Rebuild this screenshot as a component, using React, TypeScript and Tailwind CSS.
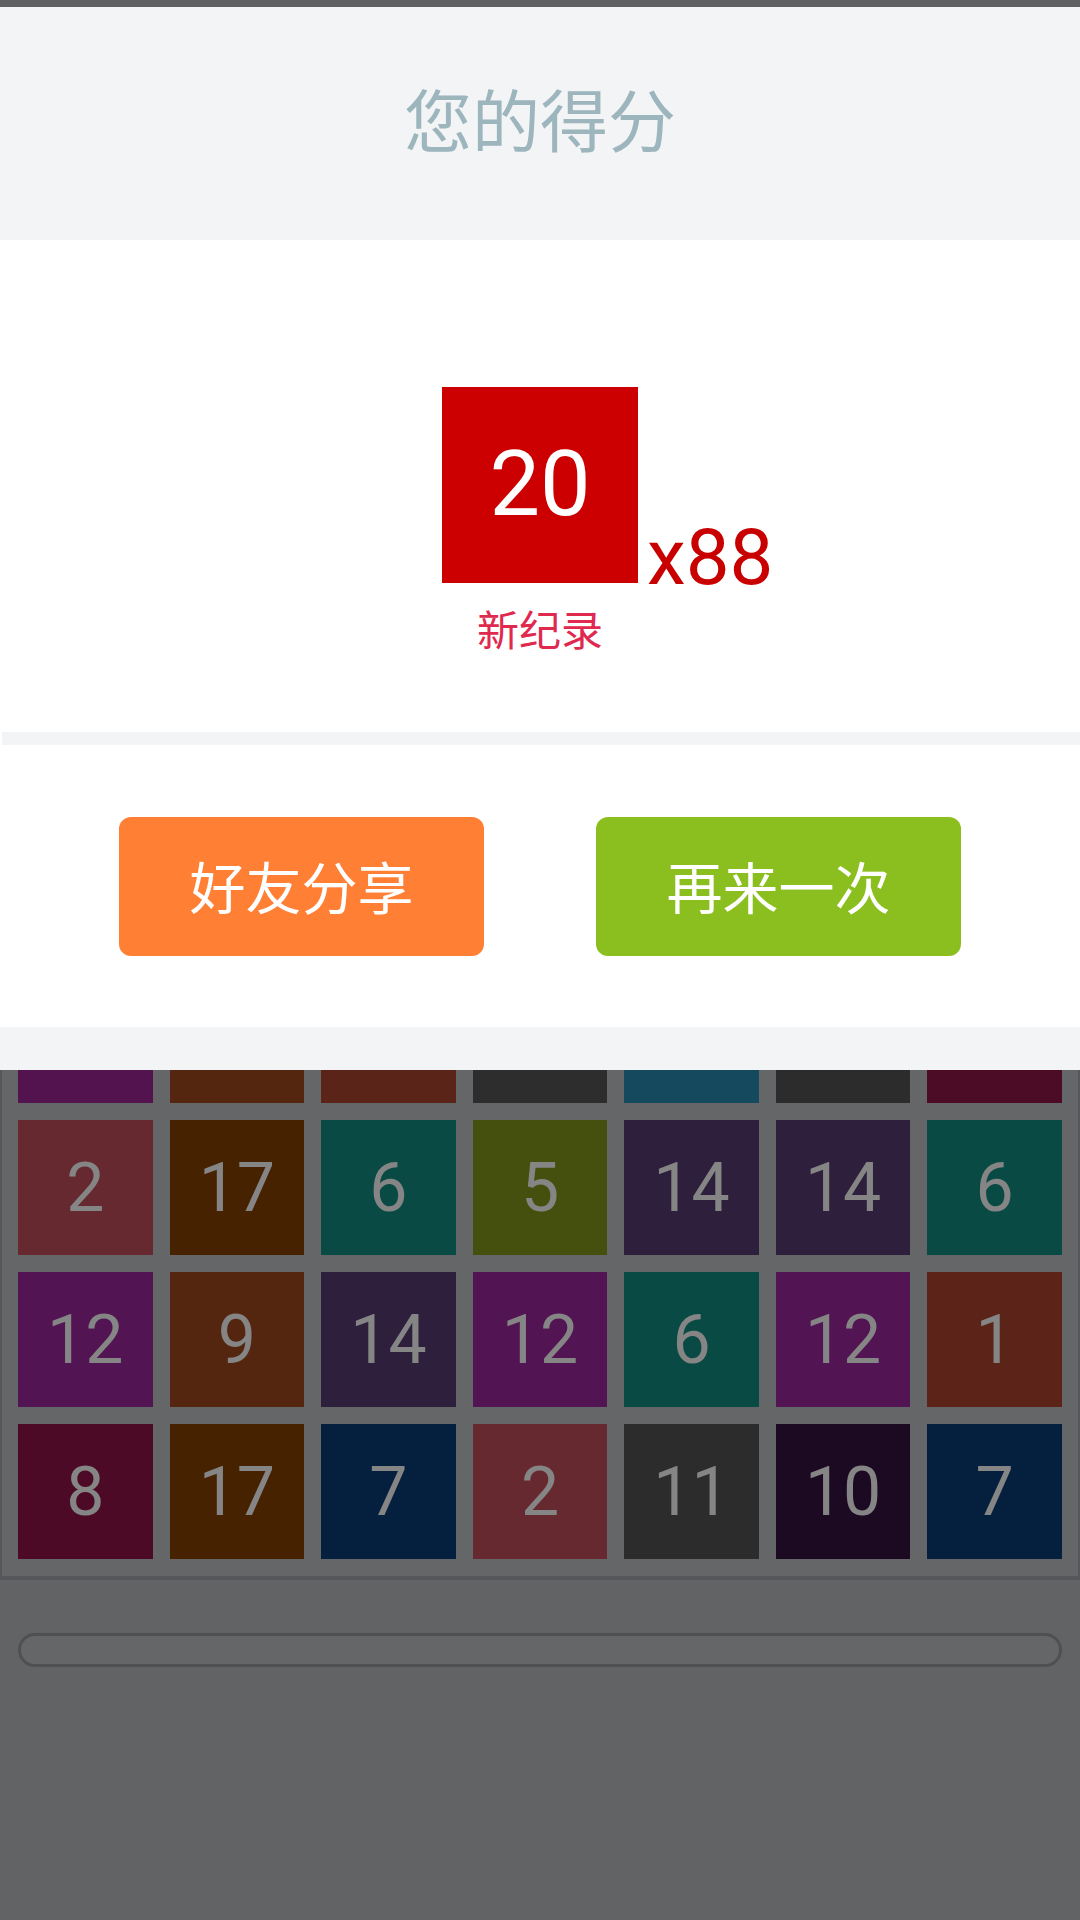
import React from "react";

type Tile = { n?: number; bg: string };

// board rows, top row sits under the result panel so only its bottom edge shows
const rows: Tile[][] = [
  [
    { bg: "bg-[#53134f]" },
    { bg: "bg-[#55260f]" },
    { bg: "bg-[#5a2418]" },
    { bg: "bg-[#2d2d2d]" },
    { bg: "bg-[#154a5e]" },
    { bg: "bg-[#2c2c2c]" },
    { bg: "bg-[#4c0c26]" },
  ],
  [
    { n: 2, bg: "bg-[#672930]" },
    { n: 17, bg: "bg-[#472200]" },
    { n: 6, bg: "bg-[#0a4a44]" },
    { n: 5, bg: "bg-[#45500e]" },
    { n: 14, bg: "bg-[#2e1f3c]" },
    { n: 14, bg: "bg-[#2e1f3c]" },
    { n: 6, bg: "bg-[#0a4a44]" },
  ],
  [
    { n: 12, bg: "bg-[#521452]" },
    { n: 9, bg: "bg-[#54260f]" },
    { n: 14, bg: "bg-[#2e1f3c]" },
    { n: 12, bg: "bg-[#521452]" },
    { n: 6, bg: "bg-[#0a4a44]" },
    { n: 12, bg: "bg-[#521452]" },
    { n: 1, bg: "bg-[#5c2418]" },
  ],
  [
    { n: 8, bg: "bg-[#4d0a26]" },
    { n: 17, bg: "bg-[#472200]" },
    { n: 7, bg: "bg-[#04203e]" },
    { n: 2, bg: "bg-[#672930]" },
    { n: 11, bg: "bg-[#2c2c2c]" },
    { n: 10, bg: "bg-[#1c0922]" },
    { n: 7, bg: "bg-[#04203e]" },
  ],
];

const cjk = "font-['Noto_Sans_CJK_SC','Noto_Sans',sans-serif]";
const digits = "font-['Roboto','Noto_Sans',sans-serif]";

const ResultPanel = () => (
  <div>
    {/* Title */}
    <div className="h-[233px] bg-[#f2f4f6] flex items-center justify-center pb-[12px]">
      <h1 className={`${cjk} text-[68px] leading-none text-[#9db5bd]`}>
        您的得分
      </h1>
    </div>

    {/* Score */}
    <div className="h-[492px] bg-white flex flex-col items-center pt-[147px]">
      <div className="relative">
        <div className="w-[196px] h-[196px] bg-[#cc0000] flex items-center justify-center">
          <span className={`${digits} text-[90px] leading-none text-white`}>
            20
          </span>
        </div>
        <span
          className={`${digits} absolute left-full bottom-[-14px] ml-[9px] text-[78px] leading-none text-[#c80000]`}
        >
          x88
        </span>
      </div>
      <p className={`${cjk} mt-[24px] text-[42px] leading-none text-[#e0294f]`}>
        新纪录
      </p>
    </div>

    <div className="h-[13px] bg-[#f2f4f6] border-l-2 border-white" />

    {/* Actions */}
    <div className="h-[282px] bg-white flex justify-center gap-[112px] pt-[72px]">
      <button
        className={`${cjk} w-[365px] h-[139px] rounded-[12px] bg-[#ff7f35] text-white text-[56px] leading-none pb-[4px]`}
      >
        好友分享
      </button>
      <button
        className={`${cjk} w-[365px] h-[139px] rounded-[12px] bg-[#8bbf1f] text-white text-[56px] leading-none pb-[4px]`}
      >
        再来一次
      </button>
    </div>

    <div className="h-[43px] bg-[#f2f4f6]" />
  </div>
);

const Board = () => (
  <div className="h-[510px] overflow-hidden bg-[#656667] border-l-2 border-r-2 border-b-4 border-[#56575a]">
    <div className="mt-[-102px] px-[16px] grid grid-cols-7 gap-x-[17px] gap-y-[17px]">
      {rows.flat().map((t, i) => (
        <div
          key={i}
          className={`${t.bg} h-[135px] flex items-center justify-center`}
        >
          {t.n !== undefined && (
            <span
              className={`${digits} text-[68px] leading-none text-[#858585]`}
            >
              {t.n}
            </span>
          )}
        </div>
      ))}
    </div>
  </div>
);

export default function App() {
  return (
    <div className="w-[1080px] h-[1920px] bg-[#626365] flex flex-col overflow-hidden">
      <div className="h-[7px] bg-[#5f6062]" />
      <ResultPanel />
      <Board />
      <div className="mt-[53px] mx-[18px] h-[34px] rounded-full border-[3px] border-[#4f5052] bg-[#656667]" />
    </div>
  );
}
